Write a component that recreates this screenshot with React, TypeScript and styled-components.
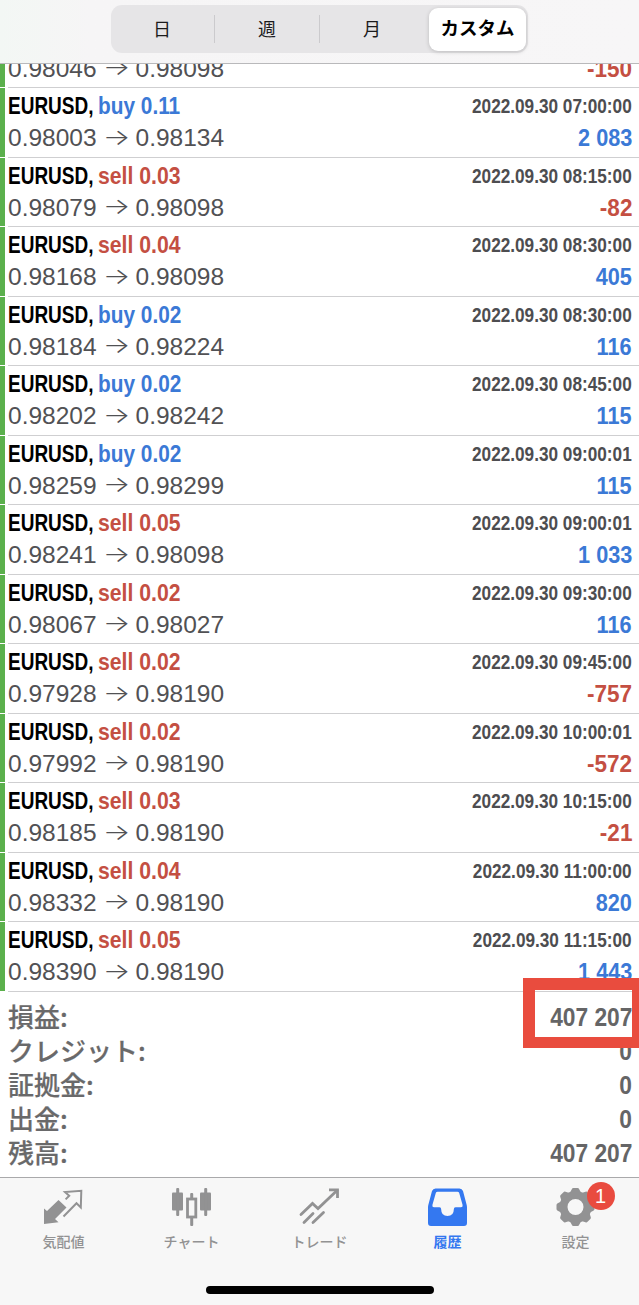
import React from "react";
import styled, { createGlobalStyle } from "styled-components";

const GlobalStyle = createGlobalStyle`
  *, *::before, *::after { box-sizing: border-box; }
  html, body { margin: 0; padding: 0; background: #fff; }
  body { font-family: "Liberation Sans", "Noto Sans CJK JP", sans-serif; overflow: hidden; }
`;

const BLUE = "#3b79d6";
const RED = "#c44f42";

const Screen = styled.div`
  width: 639px;
  height: 1305px;
  display: flex;
  flex-direction: column;
  overflow: hidden;
  background: #fff;
`;

const Header = styled.header`
  flex: none;
  height: 64px;
  padding: 5px 111px 0 111px;
  border-bottom: 1px solid #b9b9bb;
  background: linear-gradient(90deg, #f3f7f4 0, #f6f5f6 14%, #f7f6f7 100%);
`;

const Segments = styled.div`
  width: 417px;
  height: 48px;
  padding: 2px;
  border-radius: 11px;
  background: #e6e5e7;
  display: flex;
  align-items: center;
`;

const Segment = styled.button<{ $divider?: boolean }>`
  flex: 0 0 105px;
  height: 28px;
  padding: 0 0 3px;
  border: 0;
  border-right: 1px solid ${(p) => (p.$divider ? "#cbcacd" : "transparent")};
  background: none;
  color: #1b1b1c;
  font: 400 18px/24px "Noto Sans CJK JP", sans-serif;
  &:first-child { flex-basis: 102px; padding-right: 3px; }
`;

const ActiveSegment = styled.button`
  flex: none;
  width: 97px;
  height: 43px;
  margin-left: 4px;
  padding: 0 0 4px;
  border: 0;
  border-radius: 9px;
  background: #fff;
  box-shadow: 0 1px 4px rgba(0, 0, 0, 0.18);
  color: #000;
  font: 700 18.5px/38px "Noto Sans CJK JP", sans-serif;
  white-space: nowrap;
`;

const DealList = styled.main`
  flex: none;
  height: 928px;
  display: flex;
  flex-direction: column;
  justify-content: flex-end;
  overflow: hidden;
`;

const Deal = styled.section`
  flex: none;
  height: 69.54px;
  display: flex;
  border-bottom: 1px solid #fff;
`;

const GreenBar = styled.div`
  flex: none;
  width: 5px;
  background: #5bb04c;
`;

const DealBody = styled.div`
  flex: 1;
  margin: 0 0 -1px 3px;
  padding: 2px 7px 0 0;
  border-bottom: 1px solid #cfcfd1;
`;

const Line = styled.div`
  height: 32px;
  display: flex;
  justify-content: space-between;
  align-items: center;
  white-space: nowrap;
`;

const Title = styled.span`
  display: flex;
`;

/* Condensed bold face: the glyphs are squeezed towards the side they are aligned to. */
const Narrow = styled.span<{ $size: number; $color: string; $squeeze: number; $width?: number; $right?: boolean }>`
  display: inline-block;
  width: ${(p) => (p.$width ? `${p.$width}px` : "auto")};
  font-weight: 700;
  font-size: ${(p) => p.$size}px;
  color: ${(p) => p.$color};
  line-height: 32px;
  white-space: pre;
  transform: scaleX(${(p) => p.$squeeze});
  transform-origin: ${(p) => (p.$right ? "right" : "left")} center;
`;

const Prices = styled.span`
  display: flex;
  align-items: center;
  font-size: 24.5px;
  line-height: 32px;
  color: #515154;
`;

const Arrow = styled.span`
  width: 39px;
  text-align: center;
  font-family: Inter, sans-serif;
  font-weight: 300;
  font-size: 22px;
  line-height: 28px;
  padding-bottom: 3px;
  transform: scaleX(1.32);
`;

const Summary = styled.section`
  flex: none;
  height: 185px;
  padding: 8px 7px 0 8px;
`;

const SummaryRow = styled.div`
  height: 34px;
  display: flex;
  justify-content: space-between;
  align-items: center;
`;

const SummaryLabel = styled.span`
  font: 500 26px/32px "Noto Sans CJK JP", sans-serif;
  padding-bottom: 3px;
  color: #69696a;
  -webkit-text-stroke: 0.2px #69696a;
`;

const Figure = styled.span`
  position: relative;
`;

const Marker = styled.span`
  position: absolute;
  z-index: 1;
  top: -23px;
  right: -11px;
  width: 120px;
  height: 70px;
  border: 11px solid #e94c3e;
  border-left-width: 12px;
  border-top-width: 12px;
`;

const TabBar = styled.nav`
  flex: none;
  height: 128px;
  border-top: 1px solid #a9a9ab;
  background: #f7f7f7;
  display: flex;
  flex-direction: column;
  align-items: center;
`;

const Tabs = styled.div`
  width: 100%;
  height: 108px;
  display: grid;
  grid-template-columns: repeat(5, 128px);
  margin-left: -1px;
`;

const Tab = styled.div<{ $active?: boolean }>`
  display: flex;
  flex-direction: column;
  align-items: center;
  padding-top: 8px;
  color: ${(p) => (p.$active ? "#3478f0" : "#929293")};
`;

const IconBox = styled.div`
  position: relative;
  width: 44px;
  height: 44px;
  margin-right: 2px;
  svg { display: block; }
`;

const TabLabel = styled.span<{ $active?: boolean }>`
  font: ${(p) => (p.$active ? 700 : 500)} 14px/20px "Noto Sans CJK JP", sans-serif;
  margin-top: 1px;
`;

const Badge = styled.span`
  position: absolute;
  left: 34px;
  top: -4px;
  width: 28px;
  height: 28px;
  border-radius: 50%;
  background: #e94b3f;
  color: #fff;
  text-align: center;
  font: 400 20px/28px "Liberation Sans", sans-serif;
`;

const HomeIndicator = styled.div`
  width: 228px;
  height: 8px;
  margin-left: 1px;
  border-radius: 4px;
  background: #000;
`;

const QuotesIcon = () => (
  <svg width="44" height="44" viewBox="0 0 44 44">
    <path fill="currentColor" d="M3 22.5 6 25 17.5 14 25.5 21.5 14 33 17.5 36.2 3 38Z" />
    <path
      fill="none"
      stroke="currentColor"
      strokeWidth="2"
      d="M22.5 30.5 35.5 17.2 39.8 21.5 40.3 4.8 24 6.1 28.2 9.8 24.6 13.4"
    />
  </svg>
);

const ChartIcon = () => (
  <svg width="44" height="44" viewBox="0 0 44 44">
    <g fill="currentColor">
      <rect x="3" y="6.5" width="11" height="18" rx="1" />
      <rect x="7.2" y="2" width="3" height="28" rx="1" />
      <rect x="31" y="6.5" width="11" height="18" rx="1" />
      <rect x="35.2" y="2" width="3" height="28" rx="1" />
      <rect x="21.2" y="7" width="3" height="6" rx="1" />
      <rect x="21.2" y="31" width="3" height="9" rx="1" />
    </g>
    <rect x="18.5" y="13" width="8.3" height="18" fill="none" stroke="currentColor" strokeWidth="2.8" />
  </svg>
);

const TradeIcon = () => (
  <svg width="44" height="44" viewBox="0 0 44 44" fill="none" stroke="currentColor" strokeWidth="2.8" strokeLinecap="round">
    <path d="M4 28.5 15.5 17.5 21 22.5 40 4.5" />
    <path d="M32 3.8H40.5V12" strokeLinecap="butt" />
    <path d="M7 36.5 16 27.5M16 36.5 26.5 26.5" />
  </svg>
);

const HistoryIcon = () => (
  <svg width="44" height="44" viewBox="0 0 44 44">
    <path
      fill="currentColor"
      fillRule="evenodd"
      d="M10.5 2.5H34.5Q37 2.5 38 5L41.7 19Q42 20 42 21.5V37Q42 40 39 40H6Q3 40 3 37V21.5Q3 20 3.3 19L7 5Q8 2.5 10.5 2.5ZM12.5 5.8Q11.2 5.8 10.8 7L7.4 19Q7 21.3 9 21.3H14.5Q16.2 21.3 16.2 23.5Q16.2 30 22.5 30Q28.8 30 28.8 23.5Q28.8 21.3 30.5 21.3H36Q38 21.3 37.6 19L34.2 7Q33.8 5.8 32.5 5.8Z"
    />
  </svg>
);

const SettingsIcon = () => (
  <svg width="44" height="44" viewBox="0 0 44 44">
    <circle cx="22.5" cy="21" r="12" fill="none" stroke="currentColor" strokeWidth="8" />
    <g fill="currentColor">
      {[0, 45, 90, 135, 180, 225, 270, 315].map((angle) => (
        <path
          key={angle}
          transform={`rotate(${angle} 22.5 21)`}
          d="M16.5 7.5 18.8 3.2Q19.2 2 20.5 2H24.5Q25.8 2 26.2 3.2L28.5 7.5Z"
        />
      ))}
    </g>
  </svg>
);

type DealData = [side: string, lot: string, open: string, close: string, time: string, profit: string];

const deals: DealData[] = [
  ["sell", "0.02", "0.98046", "0.98098", "2022.09.30 06:45:00", "-150"],
  ["buy", "0.11", "0.98003", "0.98134", "2022.09.30 07:00:00", "2 083"],
  ["sell", "0.03", "0.98079", "0.98098", "2022.09.30 08:15:00", "-82"],
  ["sell", "0.04", "0.98168", "0.98098", "2022.09.30 08:30:00", "405"],
  ["buy", "0.02", "0.98184", "0.98224", "2022.09.30 08:30:00", "116"],
  ["buy", "0.02", "0.98202", "0.98242", "2022.09.30 08:45:00", "115"],
  ["buy", "0.02", "0.98259", "0.98299", "2022.09.30 09:00:01", "115"],
  ["sell", "0.05", "0.98241", "0.98098", "2022.09.30 09:00:01", "1 033"],
  ["sell", "0.02", "0.98067", "0.98027", "2022.09.30 09:30:00", "116"],
  ["sell", "0.02", "0.97928", "0.98190", "2022.09.30 09:45:00", "-757"],
  ["sell", "0.02", "0.97992", "0.98190", "2022.09.30 10:00:01", "-572"],
  ["sell", "0.03", "0.98185", "0.98190", "2022.09.30 10:15:00", "-21"],
  ["sell", "0.04", "0.98332", "0.98190", "2022.09.30 11:00:00", "820"],
  ["sell", "0.05", "0.98390", "0.98190", "2022.09.30 11:15:00", "1 443"],
];

const summary = [
  ["損益:", "407 207"],
  ["クレジット:", "0"],
  ["証拠金:", "0"],
  ["出金:", "0"],
  ["残高:", "407 207"],
];

const tabs = [
  { label: "気配値", Icon: QuotesIcon },
  { label: "チャート", Icon: ChartIcon },
  { label: "トレード", Icon: TradeIcon },
  { label: "履歴", Icon: HistoryIcon, active: true },
  { label: "設定", Icon: SettingsIcon, badge: "1" },
];

export default function App() {
  return (
    <Screen>
      <GlobalStyle />
      <Header>
        <Segments>
          <Segment $divider>日</Segment>
          <Segment $divider>週</Segment>
          <Segment>月</Segment>
          <ActiveSegment>カスタム</ActiveSegment>
        </Segments>
      </Header>
      <DealList>
        {deals.map(([side, lot, open, close, time, profit], i) => {
          const negative = profit.startsWith("-");
          return (
            <Deal key={i}>
              <GreenBar />
              <DealBody>
                {/* The first deal is scrolled under the header, only its price line shows. */}
                <Line>
                  {i > 0 && (
                    <>
                      <Title>
                        <Narrow $size={24.5} $color="#000" $squeeze={0.775} $width={90}>EURUSD,</Narrow>
                        <Narrow $size={24.5} $color={side === "buy" ? BLUE : RED} $squeeze={side === "buy" ? 0.85 : 0.865}>
                          {side} {lot}
                        </Narrow>
                      </Title>
                      <Narrow $size={20} $color="#4d4d50" $squeeze={0.86} $right>{time}</Narrow>
                    </>
                  )}
                </Line>
                <Line>
                  <Prices>
                    {open}
                    <Arrow>→</Arrow>
                    {close}
                  </Prices>
                  <Narrow $size={24.5} $color={negative ? RED : BLUE} $squeeze={negative ? 0.92 : 0.885} $right>
                    {profit}
                  </Narrow>
                </Line>
              </DealBody>
            </Deal>
          );
        })}
      </DealList>
      <Summary>
        {summary.map(([label, value], i) => (
          <SummaryRow key={label}>
            <SummaryLabel>{label}</SummaryLabel>
            <Figure>
              <Narrow $size={25} $color="#656566" $squeeze={0.91} $right>{value}</Narrow>
              {i === 0 && <Marker />}
            </Figure>
          </SummaryRow>
        ))}
      </Summary>
      <TabBar>
        <Tabs>
          {tabs.map(({ label, Icon, active, badge }) => (
            <Tab key={label} $active={active}>
              <IconBox>
                <Icon />
                {badge && <Badge>{badge}</Badge>}
              </IconBox>
              <TabLabel $active={active}>{label}</TabLabel>
            </Tab>
          ))}
        </Tabs>
        <HomeIndicator />
      </TabBar>
    </Screen>
  );
}
